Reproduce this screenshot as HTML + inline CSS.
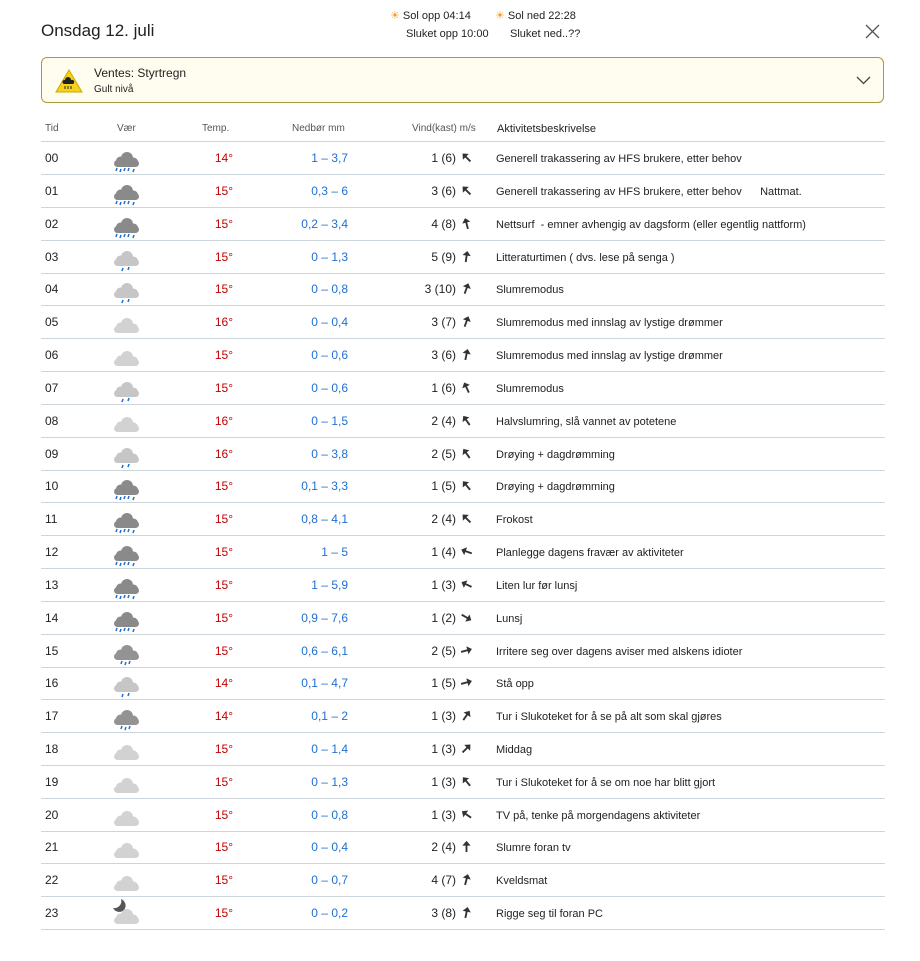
<!DOCTYPE html>
<html><head><meta charset="utf-8"><style>
body{margin:0;width:920px;height:961px;background:#fff;font-family:"Liberation Sans",sans-serif;color:#222;position:relative;overflow:hidden}
.a{position:absolute;white-space:nowrap}
.row{position:absolute;left:41px;width:844px;height:32px;border-bottom:1px solid #ccd5dc;font-size:12px}
.row span{position:absolute;top:9px}
.t{left:4px}
.tp{right:652px;color:#c00000}
.pr{right:537px;color:#1f6fd1}
.w{right:429px}
.row span.d{left:455px;font-size:11px;top:11px}
</style></head><body>
<svg width="0" height="0" style="position:absolute">
<defs>
<g id="cloud"><circle cx="15" cy="10" r="6"/><circle cx="8.5" cy="13" r="4.5"/><circle cx="21.5" cy="14" r="4.5"/><rect x="2" y="12" width="25" height="7" rx="3.5"/></g>
<symbol id="cd" viewBox="0 0 28 26"><use href="#cloud" fill="#8a8a8a"/><g stroke="#1f6fd1" stroke-width="1.5"><path d="M5 20l-1 3M9 21l-1 3M13 20l-1 3M17 20l-1 3M22 21l-1 3"/></g></symbol>
<symbol id="cm" viewBox="0 0 28 26"><use href="#cloud" fill="#939393"/><g stroke="#1f6fd1" stroke-width="1.5"><path d="M10 20l-1 3M14 21l-1 3M18 20l-1 3"/></g></symbol>
<symbol id="cl" viewBox="0 0 28 26"><use href="#cloud" fill="#c6c6c6"/><g stroke="#1f6fd1" stroke-width="1.5"><path d="M11 21l-1 3M17 20l-1 3"/></g></symbol>
<symbol id="cc" viewBox="0 0 28 26"><g transform="translate(0,2)"><use href="#cloud" fill="#d2d2d2"/></g></symbol>
<symbol id="cn" viewBox="0 0 28 26"><path d="M9 0a7 7 0 0 1 3 11a7 7 0 0 1 -11 -2a7 7 0 0 0 8-9z" fill="#555"/><g transform="translate(0,6)"><use href="#cloud" fill="#d2d2d2"/></g></symbol>
<symbol id="ar" viewBox="0 0 14 14"><path d="M7 13V3" stroke="#333" stroke-width="2"/><path d="M2.5 6L7 1l4.5 5z" fill="#333"/></symbol>
</defs></svg>

<div class="a" style="left:41px;top:21px;font-size:17px">Onsdag 12. juli</div>
<div class="a" style="left:390px;top:9px;font-size:11px"><span style="color:#f0a020">☀</span> Sol opp 04:14</div>
<div class="a" style="left:495px;top:9px;font-size:11px"><span style="color:#f0a020">☀</span> Sol ned 22:28</div>
<div class="a" style="left:406px;top:28px;font-size:11px">Sluket opp 10:00</div>
<div class="a" style="left:510px;top:28px;font-size:11px">Sluket ned..??</div>
<svg class="a" style="left:865px;top:24px" width="15" height="15"><path d="M1 1L14 14M14 1L1 14" stroke="#555" stroke-width="1.3"/></svg>

<div class="a" style="left:41px;top:57px;width:841px;height:44px;border:1px solid #a99a3c;border-radius:6px;background:#fffdf0"></div>
<svg class="a" style="left:55px;top:69px" width="28" height="24"><path d="M14 1L27 23H1z" fill="#f6d21a" stroke="#c9a800"/><path d="M9 15a2 2 0 0 1 1-4a3 3 0 0 1 6 0a2 2 0 0 1 2 4z" fill="#222"/><path d="M10 17v3M13 17v3M16 17v3" stroke="#222"/></svg>
<div class="a" style="left:94px;top:66px;font-size:12px">Ventes: Styrtregn</div>
<div class="a" style="left:94px;top:84px;font-size:10px">Gult nivå</div>
<svg class="a" style="left:856px;top:76px" width="15" height="9"><path d="M1 1l6.5 6.5L14 1" stroke="#444" fill="none" stroke-width="1.3"/></svg>

<div class="a" style="left:45px;top:123px;font-size:10px;color:#555">Tid</div>
<div class="a" style="left:117px;top:123px;font-size:10px;color:#555">Vær</div>
<div class="a" style="left:202px;top:123px;font-size:10px;color:#555">Temp.</div>
<div class="a" style="left:292px;top:123px;font-size:10px;color:#555">Nedbør mm</div>
<div class="a" style="left:412px;top:123px;font-size:10px;color:#555">Vind(kast) m/s</div>
<div class="a" style="left:497px;top:123px;font-size:11px">Aktivitetsbeskrivelse</div>
<div class="a" style="left:41px;top:141px;width:844px;border-top:1px solid #ccd5dc"></div>

<div class="row" style="top:142px"><span class="t">00</span><svg width="28" height="26" style="position:absolute;left:71px;top:6px"><use href="#cd"/></svg><span class="tp">14°</span><span class="pr">1 – 3,7</span><span class="w">1 (6)</span><svg style="position:absolute;left:419px;top:9px;transform:rotate(-45deg)" width="13" height="13"><use href="#ar"/></svg><span class="d">Generell trakassering av HFS brukere, etter behov</span></div>
<div class="row" style="top:174.8px"><span class="t">01</span><svg width="28" height="26" style="position:absolute;left:71px;top:6px"><use href="#cd"/></svg><span class="tp">15°</span><span class="pr">0,3 – 6</span><span class="w">3 (6)</span><svg style="position:absolute;left:419px;top:9px;transform:rotate(-45deg)" width="13" height="13"><use href="#ar"/></svg><span class="d">Generell trakassering av HFS brukere, etter behov &nbsp;&nbsp;&nbsp;&nbsp; Nattmat.</span></div>
<div class="row" style="top:207.7px"><span class="t">02</span><svg width="28" height="26" style="position:absolute;left:71px;top:6px"><use href="#cd"/></svg><span class="tp">15°</span><span class="pr">0,2 – 3,4</span><span class="w">4 (8)</span><svg style="position:absolute;left:419px;top:9px;transform:rotate(-15deg)" width="13" height="13"><use href="#ar"/></svg><span class="d">Nettsurf &nbsp;- emner avhengig av dagsform (eller egentlig nattform)</span></div>
<div class="row" style="top:240.5px"><span class="t">03</span><svg width="28" height="26" style="position:absolute;left:71px;top:6px"><use href="#cl"/></svg><span class="tp">15°</span><span class="pr">0 – 1,3</span><span class="w">5 (9)</span><svg style="position:absolute;left:419px;top:9px;transform:rotate(8deg)" width="13" height="13"><use href="#ar"/></svg><span class="d">Litteraturtimen ( dvs. lese på senga )</span></div>
<div class="row" style="top:273.3px"><span class="t">04</span><svg width="28" height="26" style="position:absolute;left:71px;top:6px"><use href="#cl"/></svg><span class="tp">15°</span><span class="pr">0 – 0,8</span><span class="w">3 (10)</span><svg style="position:absolute;left:419px;top:9px;transform:rotate(20deg)" width="13" height="13"><use href="#ar"/></svg><span class="d">Slumremodus</span></div>
<div class="row" style="top:306.2px"><span class="t">05</span><svg width="28" height="26" style="position:absolute;left:71px;top:6px"><use href="#cc"/></svg><span class="tp">16°</span><span class="pr">0 – 0,4</span><span class="w">3 (7)</span><svg style="position:absolute;left:419px;top:9px;transform:rotate(20deg)" width="13" height="13"><use href="#ar"/></svg><span class="d">Slumremodus med innslag av lystige drømmer</span></div>
<div class="row" style="top:339px"><span class="t">06</span><svg width="28" height="26" style="position:absolute;left:71px;top:6px"><use href="#cc"/></svg><span class="tp">15°</span><span class="pr">0 – 0,6</span><span class="w">3 (6)</span><svg style="position:absolute;left:419px;top:9px;transform:rotate(12deg)" width="13" height="13"><use href="#ar"/></svg><span class="d">Slumremodus med innslag av lystige drømmer</span></div>
<div class="row" style="top:371.8px"><span class="t">07</span><svg width="28" height="26" style="position:absolute;left:71px;top:6px"><use href="#cl"/></svg><span class="tp">15°</span><span class="pr">0 – 0,6</span><span class="w">1 (6)</span><svg style="position:absolute;left:419px;top:9px;transform:rotate(-25deg)" width="13" height="13"><use href="#ar"/></svg><span class="d">Slumremodus</span></div>
<div class="row" style="top:404.6px"><span class="t">08</span><svg width="28" height="26" style="position:absolute;left:71px;top:6px"><use href="#cc"/></svg><span class="tp">16°</span><span class="pr">0 – 1,5</span><span class="w">2 (4)</span><svg style="position:absolute;left:419px;top:9px;transform:rotate(-35deg)" width="13" height="13"><use href="#ar"/></svg><span class="d">Halvslumring, slå vannet av potetene</span></div>
<div class="row" style="top:437.5px"><span class="t">09</span><svg width="28" height="26" style="position:absolute;left:71px;top:6px"><use href="#cl"/></svg><span class="tp">16°</span><span class="pr">0 – 3,8</span><span class="w">2 (5)</span><svg style="position:absolute;left:419px;top:9px;transform:rotate(-35deg)" width="13" height="13"><use href="#ar"/></svg><span class="d">Drøying + dagdrømming</span></div>
<div class="row" style="top:470.3px"><span class="t">10</span><svg width="28" height="26" style="position:absolute;left:71px;top:6px"><use href="#cd"/></svg><span class="tp">15°</span><span class="pr">0,1 – 3,3</span><span class="w">1 (5)</span><svg style="position:absolute;left:419px;top:9px;transform:rotate(-40deg)" width="13" height="13"><use href="#ar"/></svg><span class="d">Drøying + dagdrømming</span></div>
<div class="row" style="top:503.1px"><span class="t">11</span><svg width="28" height="26" style="position:absolute;left:71px;top:6px"><use href="#cd"/></svg><span class="tp">15°</span><span class="pr">0,8 – 4,1</span><span class="w">2 (4)</span><svg style="position:absolute;left:419px;top:9px;transform:rotate(-45deg)" width="13" height="13"><use href="#ar"/></svg><span class="d">Frokost</span></div>
<div class="row" style="top:536px"><span class="t">12</span><svg width="28" height="26" style="position:absolute;left:71px;top:6px"><use href="#cd"/></svg><span class="tp">15°</span><span class="pr">1 – 5</span><span class="w">1 (4)</span><svg style="position:absolute;left:419px;top:9px;transform:rotate(-70deg)" width="13" height="13"><use href="#ar"/></svg><span class="d">Planlegge dagens fravær av aktiviteter</span></div>
<div class="row" style="top:568.8px"><span class="t">13</span><svg width="28" height="26" style="position:absolute;left:71px;top:6px"><use href="#cd"/></svg><span class="tp">15°</span><span class="pr">1 – 5,9</span><span class="w">1 (3)</span><svg style="position:absolute;left:419px;top:9px;transform:rotate(-65deg)" width="13" height="13"><use href="#ar"/></svg><span class="d">Liten lur før lunsj</span></div>
<div class="row" style="top:601.6px"><span class="t">14</span><svg width="28" height="26" style="position:absolute;left:71px;top:6px"><use href="#cd"/></svg><span class="tp">15°</span><span class="pr">0,9 – 7,6</span><span class="w">1 (2)</span><svg style="position:absolute;left:419px;top:9px;transform:rotate(120deg)" width="13" height="13"><use href="#ar"/></svg><span class="d">Lunsj</span></div>
<div class="row" style="top:634.5px"><span class="t">15</span><svg width="28" height="26" style="position:absolute;left:71px;top:6px"><use href="#cm"/></svg><span class="tp">15°</span><span class="pr">0,6 – 6,1</span><span class="w">2 (5)</span><svg style="position:absolute;left:419px;top:9px;transform:rotate(75deg)" width="13" height="13"><use href="#ar"/></svg><span class="d">Irritere seg over dagens aviser med alskens idioter</span></div>
<div class="row" style="top:667.3px"><span class="t">16</span><svg width="28" height="26" style="position:absolute;left:71px;top:6px"><use href="#cl"/></svg><span class="tp">14°</span><span class="pr">0,1 – 4,7</span><span class="w">1 (5)</span><svg style="position:absolute;left:419px;top:9px;transform:rotate(75deg)" width="13" height="13"><use href="#ar"/></svg><span class="d">Stå opp</span></div>
<div class="row" style="top:700.1px"><span class="t">17</span><svg width="28" height="26" style="position:absolute;left:71px;top:6px"><use href="#cm"/></svg><span class="tp">14°</span><span class="pr">0,1 – 2</span><span class="w">1 (3)</span><svg style="position:absolute;left:419px;top:9px;transform:rotate(35deg)" width="13" height="13"><use href="#ar"/></svg><span class="d">Tur i Slukoteket for å se på alt som skal gjøres</span></div>
<div class="row" style="top:732.9px"><span class="t">18</span><svg width="28" height="26" style="position:absolute;left:71px;top:6px"><use href="#cc"/></svg><span class="tp">15°</span><span class="pr">0 – 1,4</span><span class="w">1 (3)</span><svg style="position:absolute;left:419px;top:9px;transform:rotate(45deg)" width="13" height="13"><use href="#ar"/></svg><span class="d">Middag</span></div>
<div class="row" style="top:765.8px"><span class="t">19</span><svg width="28" height="26" style="position:absolute;left:71px;top:6px"><use href="#cc"/></svg><span class="tp">15°</span><span class="pr">0 – 1,3</span><span class="w">1 (3)</span><svg style="position:absolute;left:419px;top:9px;transform:rotate(-40deg)" width="13" height="13"><use href="#ar"/></svg><span class="d">Tur i Slukoteket for å se om noe har blitt gjort</span></div>
<div class="row" style="top:798.6px"><span class="t">20</span><svg width="28" height="26" style="position:absolute;left:71px;top:6px"><use href="#cc"/></svg><span class="tp">15°</span><span class="pr">0 – 0,8</span><span class="w">1 (3)</span><svg style="position:absolute;left:419px;top:9px;transform:rotate(-55deg)" width="13" height="13"><use href="#ar"/></svg><span class="d">TV på, tenke på morgendagens aktiviteter</span></div>
<div class="row" style="top:831.4px"><span class="t">21</span><svg width="28" height="26" style="position:absolute;left:71px;top:6px"><use href="#cc"/></svg><span class="tp">15°</span><span class="pr">0 – 0,4</span><span class="w">2 (4)</span><svg style="position:absolute;left:419px;top:9px" width="13" height="13"><use href="#ar"/></svg><span class="d">Slumre foran tv</span></div>
<div class="row" style="top:864.3px"><span class="t">22</span><svg width="28" height="26" style="position:absolute;left:71px;top:6px"><use href="#cc"/></svg><span class="tp">15°</span><span class="pr">0 – 0,7</span><span class="w">4 (7)</span><svg style="position:absolute;left:419px;top:9px;transform:rotate(15deg)" width="13" height="13"><use href="#ar"/></svg><span class="d">Kveldsmat</span></div>
<div class="row" style="top:897.1px"><span class="t">23</span><svg width="28" height="26" style="position:absolute;left:71px;top:2px"><use href="#cn"/></svg><span class="tp">15°</span><span class="pr">0 – 0,2</span><span class="w">3 (8)</span><svg style="position:absolute;left:419px;top:9px;transform:rotate(12deg)" width="13" height="13"><use href="#ar"/></svg><span class="d">Rigge seg til foran PC</span></div>
</body></html>
